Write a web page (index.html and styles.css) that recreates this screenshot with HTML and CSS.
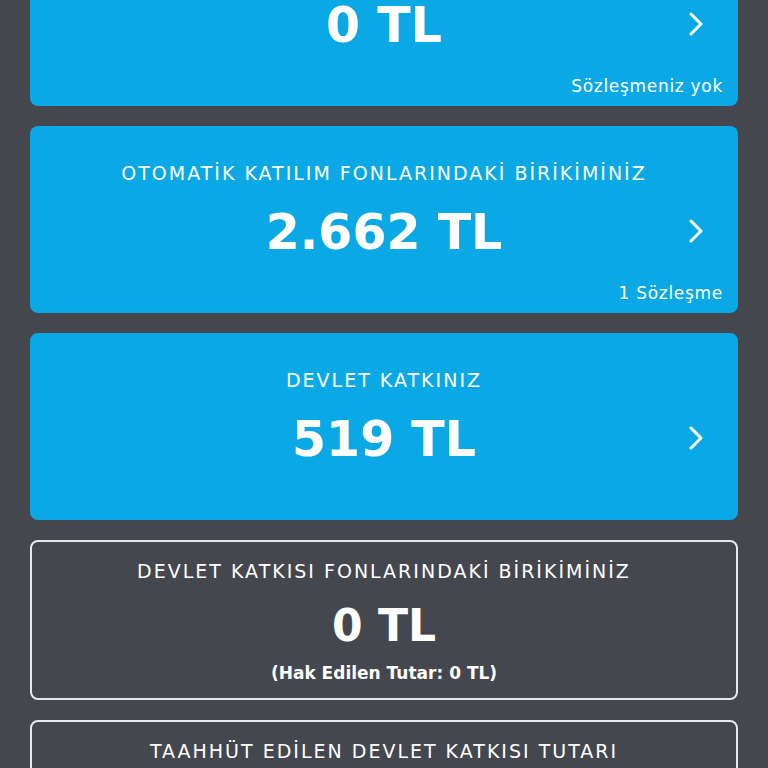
FILE: index.html
```html
<!DOCTYPE html>
<html>
<head>
	<title>Birikimleriniz</title>
	<link rel="stylesheet" href="styles.css">
</head>
<body>
	<div class="list">
		<div class="card blue">
			<p class="title">BİREYSEL EMEKLİLİK BİRİKİMİNİZ</p>
			<p class="amount">0 TL</p>
			<p class="note">Sözleşmeniz yok</p>
			<svg class="chevron" width="16" height="26" viewBox="0 0 16 26"><path d="M3 3 L13 13 L3 23" fill="none" stroke="#fff" stroke-width="3" stroke-linecap="round" stroke-linejoin="round"/></svg>
		</div>
		<div class="card blue">
			<p class="title">OTOMATİK KATILIM FONLARINDAKİ BİRİKİMİNİZ</p>
			<p class="amount">2.662 TL</p>
			<p class="note">1 Sözleşme</p>
			<svg class="chevron" width="16" height="26" viewBox="0 0 16 26"><path d="M3 3 L13 13 L3 23" fill="none" stroke="#fff" stroke-width="3" stroke-linecap="round" stroke-linejoin="round"/></svg>
		</div>
		<div class="card blue">
			<p class="title">DEVLET KATKINIZ</p>
			<p class="amount">519 TL</p>
			<svg class="chevron" width="16" height="26" viewBox="0 0 16 26"><path d="M3 3 L13 13 L3 23" fill="none" stroke="#fff" stroke-width="3" stroke-linecap="round" stroke-linejoin="round"/></svg>
		</div>
		<div class="card outline">
			<p class="title">DEVLET KATKISI FONLARINDAKİ BİRİKİMİNİZ</p>
			<p class="amount">0 TL</p>
			<p class="sub">(Hak Edilen Tutar: 0 TL)</p>
		</div>
		<div class="card outline">
			<p class="title">TAAHHÜT EDİLEN DEVLET KATKISI TUTARI</p>
			<p class="amount">0 TL</p>
		</div>
	</div>
</body>
</html>
```
FILE: styles.css
```css
body {
	margin: 0;
	padding: 0;
	background-color: #45474f;
	font-family: "DejaVu Sans", sans-serif;
	color: #fff;
	overflow: hidden;
}
.list {
	display: flex;
	flex-direction: column;
	gap: 20px;
	padding: 0 30px;
	margin-top: -81px;
}
.card {
	position: relative;
	display: flex;
	flex-direction: column;
	align-items: center;
	border-radius: 8px;
	box-sizing: border-box;
}
.card p {
	margin: 0;
}
.blue {
	background-color: #0aa9e6;
	height: 187px;
	padding: 35px 14px 10px;
}
.outline {
	border: 2px solid #e8e9ec;
	height: 160px;
	padding: 17px 14px 14px;
}
.title {
	font-size: 19px;
	line-height: 24px;
	letter-spacing: 2px;
}
.amount {
	font-weight: bold;
	font-size: 49px;
	line-height: 60px;
	margin-top: 18px !important;
}
.outline .amount {
	font-size: 44px;
	line-height: 50px;
}
.note {
	align-self: flex-end;
	font-size: 17px;
	line-height: 20px;
	letter-spacing: 0.7px;
	margin-top: 20px !important;
	margin-right: 1px !important;
}
.sub {
	font-size: 17px;
	font-weight: 600;
	line-height: 22px;
	margin-top: 11px !important;
}
.chevron {
	position: absolute;
	right: 34px;
	top: 92px;
}
```
